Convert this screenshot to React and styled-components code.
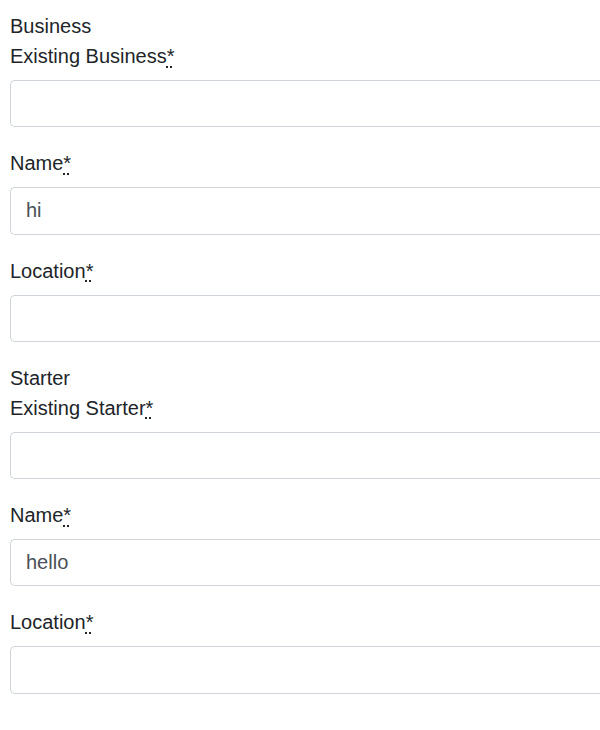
import React from "react";
import styled, { createGlobalStyle } from "styled-components";

const Global = createGlobalStyle`
  body {
    margin: 0;
    background: #fff;
    font-family: "Liberation Sans", Arial, sans-serif;
    font-size: 20px;
    line-height: 30px;
    color: #212529;
  }
  * { box-sizing: border-box; }
`;

const Form = styled.form`
  display: block;
  padding: 10px 0 10px 10px;
`;

const Section = styled.section`
  display: block;
`;

const Heading = styled.div`
  height: 30px;
  padding-top: 1px;
  font-size: 20px;
  line-height: 30px;
`;

const Group = styled.div`
  display: flex;
  flex-direction: column;
  margin-bottom: 20px;
`;

const Label = styled.label`
  display: block;
  padding-top: 1px;
  margin-bottom: 9px;
  line-height: 30px;
`;

const Req = styled.abbr`
  text-decoration: underline dotted;
  text-underline-offset: 3px;
  cursor: help;
`;

const Input = styled.input`
  display: block;
  width: 100%;
  height: 47.25px;
  padding: 7px 15px;
  font-family: "Liberation Sans", Arial, sans-serif;
  font-size: 20px;
  line-height: 30px;
  color: #495057;
  background: #fff;
  border: 1px solid #ced4da;
  border-right: 0;
  border-radius: 5px 0 0 5px;
  outline: none;
`;

function Field({ label, value }) {
  return (
    <Group>
      <Label>
        {label}
        <Req title="required">*</Req>
      </Label>
      <Input type="text" defaultValue={value} />
    </Group>
  );
}

function Block({ title, name }) {
  return (
    <Section>
      <Heading>{title}</Heading>
      <Field label={`Existing ${title}`} value="" />
      <Field label="Name" value={name} />
      <Field label="Location" value="" />
    </Section>
  );
}

export default function App() {
  return (
    <>
      <Global />
      <Form>
        <Block title="Business" name="hi" />
        <Block title="Starter" name="hello" />
      </Form>
    </>
  );
}
